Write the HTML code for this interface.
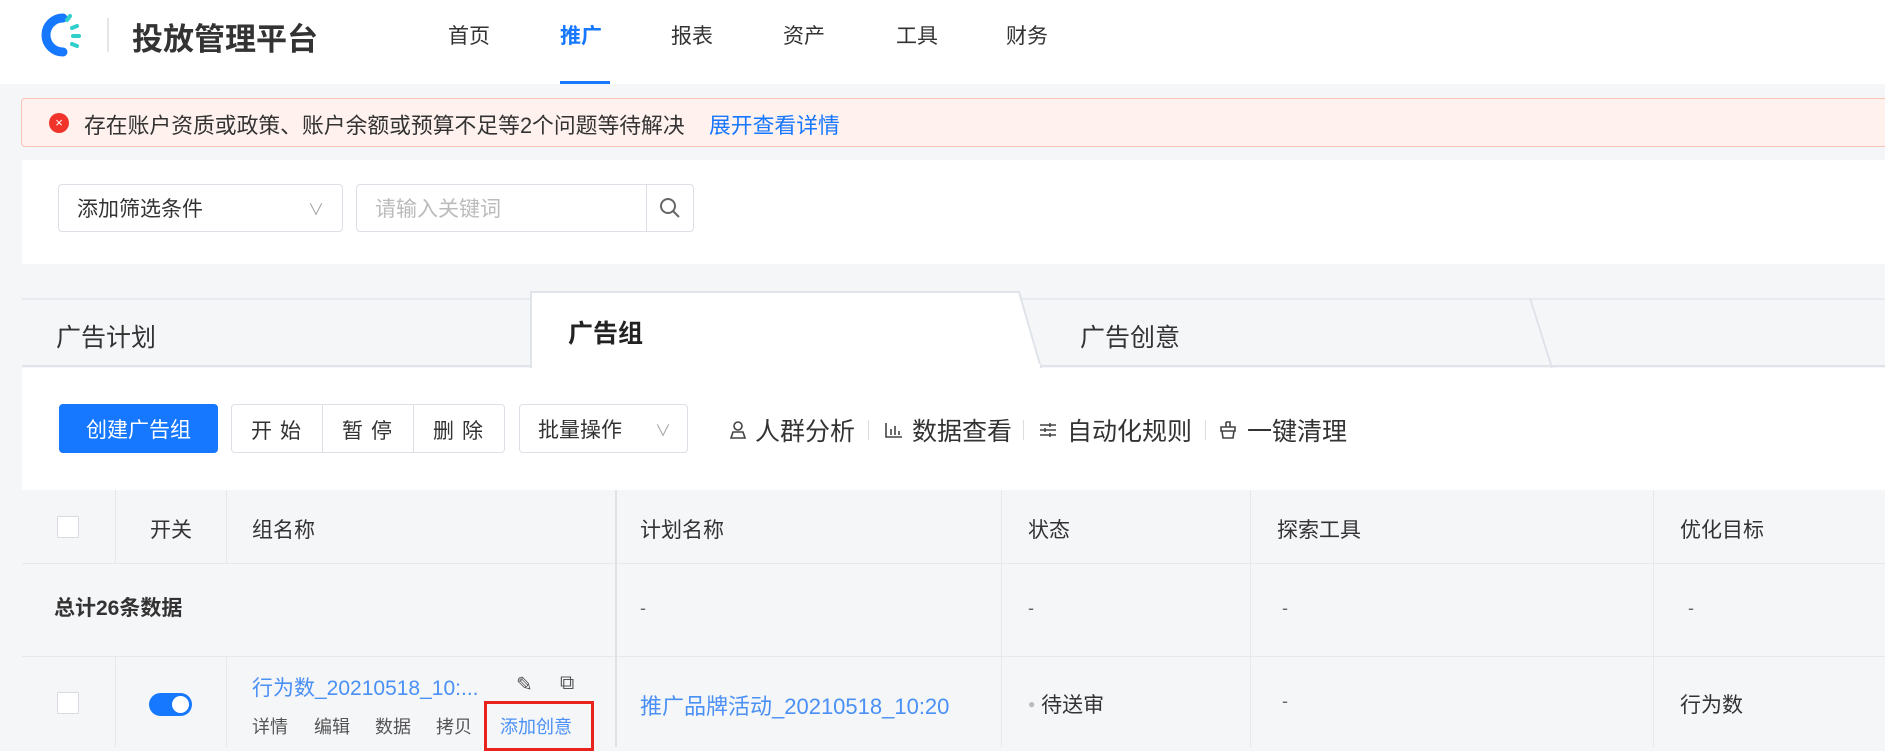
<!DOCTYPE html>
<html><head><meta charset="utf-8"><style>
*{margin:0;padding:0;box-sizing:border-box}
body{width:1885px;height:747px;overflow:hidden;background:#f5f6f8;font-family:"Liberation Sans","Noto Sans CJK SC",sans-serif;color:#333;position:relative}
.a{position:absolute;white-space:nowrap}
.nav{font-size:21px;color:#333;top:20px}
.btn{position:absolute;border:1px solid #dcdfe6;background:#fff;border-radius:4px;font-size:21px;color:#333;display:flex;align-items:center;justify-content:center}
.th{font-size:21px;color:#333;top:514px}
.vl{position:absolute;width:1px;background:#e6e8ec}
.tl{position:absolute;top:412px;font-size:25px;color:#333;white-space:nowrap}
.ti{position:absolute;top:420px}
.sp{position:absolute;top:420px;width:1px;height:20px;background:#ddd}
</style></head><body>
<!-- header -->
<div class="a" style="left:0;top:0;width:1885px;height:84px;background:#fff"></div>
<svg class="a" style="left:32px;top:10px" width="52" height="50" viewBox="0 0 52 50">
<path d="M31 8 A17 17 0 1 0 31 42" fill="none" stroke="#1677ff" stroke-width="9" stroke-linecap="round"/>
<g stroke="#2fd0c9" stroke-width="4" stroke-linecap="round"><line x1="35" y1="10" x2="38" y2="6"/><line x1="40" y1="18" x2="45" y2="16"/><line x1="41" y1="26" x2="47" y2="26"/><line x1="40" y1="34" x2="45" y2="36"/></g>
</svg>
<div class="a" style="left:107px;top:18px;width:2px;height:34px;background:#e5e5e5"></div>
<div class="a" style="left:132px;top:14px;font-size:31px;font-weight:bold;color:#333">投放管理平台</div>
<div class="a nav" style="left:448px">首页</div>
<div class="a nav" style="left:560px;color:#1677ff;font-weight:bold">推广</div>
<div class="a nav" style="left:671px">报表</div>
<div class="a nav" style="left:783px">资产</div>
<div class="a nav" style="left:896px">工具</div>
<div class="a nav" style="left:1006px">财务</div>
<div class="a" style="left:560px;top:81px;width:50px;height:3px;background:#1677ff"></div>
<!-- alert -->
<div class="a" style="left:21px;top:98px;width:1870px;height:49px;background:#fff1ee;border:1px solid #f9c3b5;border-radius:4px"></div>
<div class="a" style="left:49px;top:113px;width:20px;height:20px;border-radius:50%;background:#f0342b;color:#fff;font-size:13px;line-height:20px;text-align:center">×</div>
<div class="a" style="left:84px;top:109px;font-size:21.8px;color:#333">存在账户资质或政策、账户余额或预算不足等2个问题等待解决</div>
<div class="a" style="left:709px;top:109px;font-size:21.8px;color:#1677ff">展开查看详情</div>
<!-- filter -->
<div class="a" style="left:22px;top:160px;width:1863px;height:104px;background:#fff"></div>
<div class="btn" style="left:58px;top:184px;width:285px;height:48px;justify-content:flex-start;padding-left:18px;color:#333">添加筛选条件<span style="position:absolute;right:18px;color:#aaa;font-size:16px">∨</span></div>
<div class="btn" style="left:356px;top:184px;width:338px;height:48px;justify-content:flex-start;padding-left:18px;color:#bbb">请输入关键词</div>
<div class="a" style="left:646px;top:185px;width:1px;height:46px;background:#dcdfe6"></div>
<svg class="a" style="left:658px;top:196px" width="24" height="24" viewBox="0 0 24 24"><circle cx="10" cy="10" r="7" fill="none" stroke="#666" stroke-width="2"/><line x1="15" y1="15" x2="21" y2="21" stroke="#666" stroke-width="2"/></svg>
<!-- tabs -->
<div class="a" style="left:22px;top:298px;width:1863px;height:69px;background:#f5f6f8;border-top:2px solid #e8eaef;border-bottom:2px solid #e0e3ea"></div>
<svg class="a" style="left:0;top:290px" width="1885" height="80"><path d="M531 78 L531 2 L1019 2 L1041 78 Z" fill="#fff" stroke="#e0e3ea" stroke-width="2"/><path d="M1530 8 L1552 78" stroke="#e0e3ea" stroke-width="2"/><rect x="532" y="74" width="508" height="6" fill="#fff"/></svg>
<div class="a" style="left:56px;top:318px;font-size:25px;color:#333">广告计划</div>
<div class="a" style="left:568px;top:314px;font-size:25px;font-weight:bold;color:#222">广告组</div>
<div class="a" style="left:1080px;top:318px;font-size:25px;color:#333">广告创意</div>
<!-- toolbar -->
<div class="a" style="left:22px;top:368px;width:1863px;height:122px;background:#fff"></div>
<div class="btn" style="left:59px;top:404px;width:159px;height:49px;background:#1677ff;border-color:#1677ff;color:#fff">创建广告组</div>
<div class="btn" style="left:231px;top:404px;width:274px;height:49px"></div>
<div class="a" style="left:322px;top:405px;width:1px;height:47px;background:#dcdfe6"></div>
<div class="a" style="left:413px;top:405px;width:1px;height:47px;background:#dcdfe6"></div>
<div class="a" style="left:251px;top:415px;font-size:21px;letter-spacing:8px">开始</div>
<div class="a" style="left:342px;top:415px;font-size:21px;letter-spacing:8px">暂停</div>
<div class="a" style="left:433px;top:415px;font-size:21px;letter-spacing:8px">删除</div>
<div class="btn" style="left:519px;top:404px;width:169px;height:49px;justify-content:flex-start;padding-left:18px">批量操作<span style="position:absolute;right:16px;color:#aaa;font-size:16px">∨</span></div>
<svg class="ti" style="left:728px" width="20" height="20" viewBox="0 0 20 20" fill="none" stroke="#444" stroke-width="1.6"><circle cx="10" cy="6" r="4"/><path d="M3 18 L5 12 H15 L17 18 Z"/></svg>
<div class="tl" style="left:755px">人群分析</div>
<div class="sp" style="left:868px"></div>
<svg class="ti" style="left:884px" width="20" height="20" viewBox="0 0 20 20" fill="none" stroke="#444" stroke-width="1.6"><path d="M2 3 V17 H18 M7 9 V15 M11 6 V15 M15 11 V15"/></svg>
<div class="tl" style="left:912px">数据查看</div>
<div class="sp" style="left:1023px"></div>
<svg class="ti" style="left:1038px" width="20" height="20" viewBox="0 0 20 20" fill="none" stroke="#444" stroke-width="1.6"><path d="M2 5 H18 M2 10 H18 M2 15 H18"/><path d="M12 3 V7 M7 8 V12 M12 13 V17"/></svg>
<div class="tl" style="left:1067px">自动化规则</div>
<div class="sp" style="left:1205px"></div>
<svg class="ti" style="left:1218px" width="20" height="20" viewBox="0 0 20 20" fill="none" stroke="#444" stroke-width="1.6"><path d="M8 2 H12 V7 M8 2 V7 M3 7 H17 V11 H3 Z M4 11 L5 18 H15 L16 11"/></svg>
<div class="tl" style="left:1247px">一键清理</div>
<!-- table -->
<div class="a" style="left:22px;top:490px;width:1863px;height:257px;background:#f5f6f8"></div>
<div class="a" style="left:22px;top:563px;width:1863px;height:1px;background:#e6e8ec"></div>
<div class="a" style="left:22px;top:656px;width:1863px;height:1px;background:#e6e8ec"></div>
<div class="vl" style="left:115px;top:490px;height:73px"></div>
<div class="vl" style="left:226px;top:490px;height:73px"></div>
<div class="vl" style="left:115px;top:656px;height:91px"></div>
<div class="vl" style="left:226px;top:656px;height:91px"></div>
<div class="vl" style="left:615px;top:490px;height:257px;width:2px;background:#dfe2e7"></div>
<div class="vl" style="left:1001px;top:490px;height:257px"></div>
<div class="vl" style="left:1250px;top:490px;height:257px"></div>
<div class="vl" style="left:1653px;top:490px;height:257px"></div>
<div class="a" style="left:57px;top:516px;width:22px;height:22px;border:1px solid #d8dbe0;background:#fff;border-radius:2px"></div>
<div class="a th" style="left:150px">开关</div>
<div class="a th" style="left:252px">组名称</div>
<div class="a th" style="left:640px">计划名称</div>
<div class="a th" style="left:1028px">状态</div>
<div class="a th" style="left:1277px">探索工具</div>
<div class="a th" style="left:1680px">优化目标</div>
<div class="a" style="left:54px;top:592px;font-size:21px;font-weight:bold;color:#333">总计26条数据</div>
<div class="a" style="left:640px;top:598px;font-size:18px;color:#666">-</div>
<div class="a" style="left:1028px;top:598px;font-size:18px;color:#666">-</div>
<div class="a" style="left:1282px;top:598px;font-size:18px;color:#666">-</div>
<div class="a" style="left:1688px;top:598px;font-size:18px;color:#666">-</div>
<div class="a" style="left:57px;top:692px;width:22px;height:22px;border:1px solid #d8dbe0;background:#fff;border-radius:2px"></div>
<div class="a" style="left:149px;top:693px;width:43px;height:23px;border-radius:12px;background:#1677ff"><div style="position:absolute;right:3px;top:3px;width:17px;height:17px;border-radius:50%;background:#fff"></div></div>
<div class="a" style="left:252px;top:672px;font-size:21px;color:#4a90f5">行为数_20210518_10:...</div>
<div class="a" style="left:516px;top:672px;font-size:20px;color:#555">✎</div>
<div class="a" style="left:560px;top:672px;font-size:20px;color:#555">⧉</div>
<div class="a" style="left:252px;top:713px;font-size:18px;color:#555">详情</div>
<div class="a" style="left:314px;top:713px;font-size:18px;color:#555">编辑</div>
<div class="a" style="left:375px;top:713px;font-size:18px;color:#555">数据</div>
<div class="a" style="left:436px;top:713px;font-size:18px;color:#555">拷贝</div>
<div class="a" style="left:500px;top:713px;font-size:18px;color:#4a90f5">添加创意</div>
<div class="a" style="left:484px;top:701px;width:110px;height:50px;border:3px solid #e8231d"></div>
<div class="a" style="left:640px;top:689px;font-size:22px;color:#4a90f5">推广品牌活动_20210518_10:20</div>
<div class="a" style="left:1028px;top:689px;font-size:21px;color:#333"><span style="color:#bbb;font-size:12px;vertical-align:4px">●</span> 待送审</div>
<div class="a" style="left:1282px;top:691px;font-size:18px;color:#666">-</div>
<div class="a" style="left:1680px;top:689px;font-size:21px;color:#333">行为数</div>
</body></html>
